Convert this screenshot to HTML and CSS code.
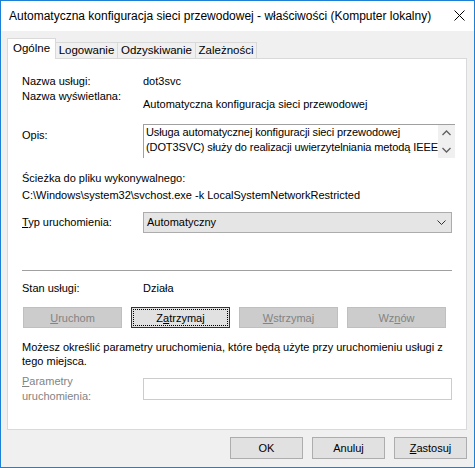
FILE: index.html
```html
<!DOCTYPE html>
<html lang="pl">
<head>
    <meta charset="UTF-8">
    <title>Właściwości usługi</title>
    <link rel="stylesheet" href="styles.css">
</head>
<body>
    <div class="okno">
        <div class="pasek-tytulu">
            <span class="tytul">Automatyczna konfiguracja sieci przewodowej - właściwości (Komputer lokalny)</span>
            <svg class="zamknij" width="11" height="11" viewBox="0 0 11 11">
                <path d="M0.5 0.5 L10.5 10.5 M10.5 0.5 L0.5 10.5" stroke="#000" stroke-width="1" fill="none"/>
            </svg>
        </div>

        <div class="zawartosc">
            <div class="zakladki">
                <div class="zakladka aktywna w-ogolne">Ogólne</div>
                <div class="zakladka w-logowanie">Logowanie</div>
                <div class="zakladka w-odzysk">Odzyskiwanie</div>
                <div class="zakladka w-zalez">Zależności</div>
            </div>

            <div class="panel">
                <div class="wiersz wiersz-nazwa">
                    <span>Nazwa usługi:</span>
                    <span>dot3svc</span>
                </div>
                <div class="wiersz wiersz-wysw">
                    <span>Nazwa wyświetlana:</span>
                    <span class="wartosc-nizej">Automatyczna konfiguracja sieci przewodowej</span>
                </div>
                <div class="wiersz wiersz-opis">
                    <span class="etykieta-opis">Opis:</span>
                    <div class="pole-opis">
                        <div class="tekst-opis">Usługa automatycznej konfiguracji sieci przewodowej<br>(DOT3SVC) służy do realizacji uwierzytelniania metodą IEEE</div>
                        <div class="suwak">
                            <svg width="9" height="6" viewBox="0 0 9 6"><path d="M0.5 5 L4.5 1 L8.5 5" stroke="#606060" stroke-width="1.3" fill="none"/></svg>
                            <svg width="9" height="6" viewBox="0 0 9 6"><path d="M0.5 1 L4.5 5 L8.5 1" stroke="#606060" stroke-width="1.3" fill="none"/></svg>
                        </div>
                    </div>
                </div>
                <div class="sciezka">
                    <div>Ścieżka do pliku wykonywalnego:</div>
                    <div class="sciezka-wartosc">C:\Windows\system32\svchost.exe -k LocalSystemNetworkRestricted</div>
                </div>
                <div class="wiersz wiersz-typ">
                    <span><u>T</u>yp uruchomienia:</span>
                    <div class="lista">
                        <span>Automatyczny</span>
                        <svg width="9" height="5" viewBox="0 0 9 5"><path d="M0.5 0.5 L4.5 4.5 L8.5 0.5" stroke="#333" stroke-width="1" fill="none"/></svg>
                    </div>
                </div>

                <div class="separator"></div>

                <div class="wiersz wiersz-stan">
                    <span>Stan usługi:</span>
                    <span>Działa</span>
                </div>
                <div class="przyciski-uslugi">
                    <button class="przycisk wylaczony"><u>U</u>ruchom</button>
                    <button class="przycisk fokus">Z<u>a</u>trzymaj</button>
                    <button class="przycisk wylaczony"><u>W</u>strzymaj</button>
                    <button class="przycisk wylaczony">Wz<u>n</u>ów</button>
                </div>

                <p class="info">Możesz określić parametry uruchomienia, które będą użyte przy uruchomieniu usługi z<br>tego miejsca.</p>

                <div class="wiersz wiersz-param">
                    <span class="szary"><u>P</u>arametry<br>uruchomienia:</span>
                    <div class="pole-param"></div>
                </div>
            </div>

            <div class="stopka">
                <button class="przycisk dolny">OK</button>
                <button class="przycisk dolny">Anuluj</button>
                <button class="przycisk dolny"><u>Z</u>astosuj</button>
            </div>
        </div>
    </div>
</body>
</html>
```

FILE: styles.css
```css
body {
    margin: 0;
    font-family: "Liberation Sans", Arial, sans-serif;
    font-size: 11px;
    color: #000;
}

.okno {
    width: 475px;
    height: 468px;
    box-sizing: border-box;
    border: 1px solid #1c80d6;
    background-color: #f0f0f0;
}

.pasek-tytulu {
    height: 30px;
    background-color: #fff;
    display: flex;
    align-items: center;
    justify-content: space-between;
    padding: 0 9px 0 8px;
    font-size: 12px;
}

.zamknij {
    margin-top: -1px;
}

.zawartosc {
    padding: 7px 7px 0 6px;
}

.zakladki {
    display: flex;
    align-items: flex-end;
    height: 20px;
}

.zakladka {
    box-sizing: border-box;
    height: 16px;
    border: 1px solid #d9d9d9;
    border-bottom: none;
    border-left: none;
    background-color: #f0f0f0;
    text-align: center;
    line-height: 15px;
    font-size: 11.5px;
}

.zakladka.aktywna {
    height: 21px;
    margin-bottom: -1px;
    border-left: 1px solid #d9d9d9;
    background-color: #fff;
    position: relative;
    line-height: 18px;
}

.w-ogolne { width: 49px; }
.w-logowanie { width: 62px; }
.w-odzysk { width: 78px; }
.w-zalez { width: 61px; }

.panel {
    box-sizing: border-box;
    height: 372px;
    border: 1px solid #d9d9d9;
    background-color: #fff;
    padding: 15px 14px 0 14px;
}

.wiersz {
    display: grid;
    grid-template-columns: 121px 1fr;
    line-height: 15px;
}

.wiersz-wysw {
    height: 23px;
}

.wartosc-nizej {
    padding-top: 8px;
}

.wiersz-opis {
    margin-top: 12px;
}

.etykieta-opis {
    padding-top: 4px;
}

.pole-opis {
    display: flex;
    height: 34px;
    border-top: 1px solid #a0a0a0;
    border-left: 1px solid #a0a0a0;
    box-sizing: border-box;
}

.tekst-opis {
    flex: 1;
    padding: 0 0 0 2px;
    line-height: 15px;
    letter-spacing: -0.1px;
    white-space: nowrap;
    overflow: hidden;
}

.suwak {
    width: 17px;
    flex-shrink: 0;
    background-color: #f0f0f0;
    display: flex;
    flex-direction: column;
    align-items: center;
    justify-content: space-between;
    padding: 5px 0 5px;
    box-sizing: border-box;
}

.sciezka {
    margin-top: 13px;
    line-height: 15px;
}

.sciezka-wartosc {
    margin-top: 2px;
}

.wiersz-typ {
    margin-top: 9px;
    align-items: center;
}

.lista {
    height: 21px;
    box-sizing: border-box;
    border: 1px solid #acacac;
    background-color: #e5e5e5;
    display: flex;
    align-items: center;
    justify-content: space-between;
    padding: 0 5px 0 3px;
}

.separator {
    margin-top: 37px;
    height: 1px;
    background-color: #a0a0a0;
}

.wiersz-stan {
    margin-top: 10px;
}

.przyciski-uslugi {
    margin-top: 11px;
    display: flex;
    gap: 9px;
    padding-left: 1px;
}

.przycisk {
    font-family: inherit;
    font-size: 11px;
    height: 21px;
    width: 99px;
    padding: 0;
    border: 1px solid #adadad;
    background-color: #e1e1e1;
    color: #000;
}

.przycisk.wylaczony {
    background-color: #cccccc;
    border-color: #bfbfbf;
    color: #838383;
}

.przycisk.fokus {
    border-color: #333;
    outline: 1px dotted #000;
    outline-offset: -3px;
}

.info {
    margin: 12px 0 0 0;
    line-height: 14px;
    white-space: nowrap;
}

.wiersz-param {
    margin-top: 6px;
    align-items: center;
}

.szary {
    color: #838383;
}

.pole-param {
    height: 22px;
    box-sizing: border-box;
    border: 1px solid #cccccc;
    background-color: #fff;
}

.stopka {
    display: flex;
    justify-content: flex-end;
    gap: 9px;
    margin-top: 7px;
}

.przycisk.dolny {
    width: 73px;
    height: 22px;
}
```
